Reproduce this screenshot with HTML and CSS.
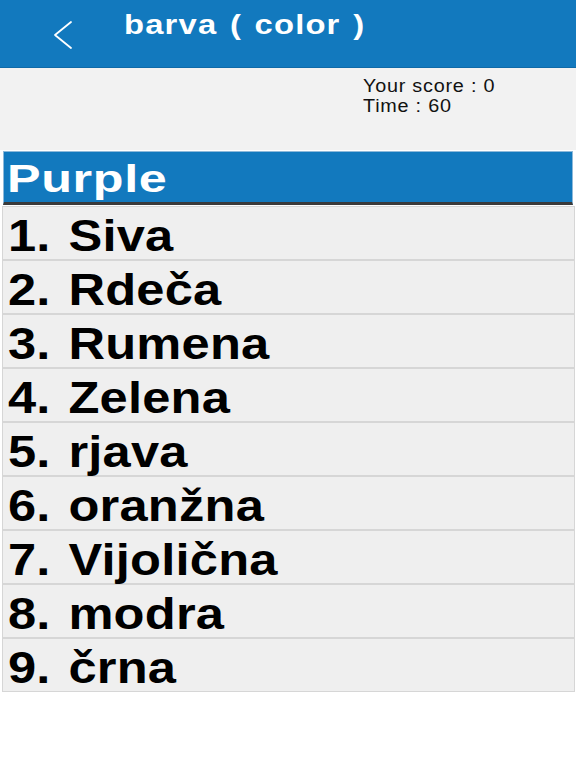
FILE: index.html
```html
<!DOCTYPE html>
<html lang="sl">
<head>
<meta charset="utf-8">
<title>barva ( color )</title>
<link rel="stylesheet" href="styles.css">
</head>
<body>
<header class="topbar">
  <svg class="back" width="24" height="30" viewBox="0 0 24 30" aria-hidden="true">
    <polyline points="20,2 4,15 20,28" fill="none" stroke="#ffffff" stroke-width="1.8" stroke-linecap="round" stroke-linejoin="round"/>
  </svg>
  <h1 class="title"><span class="wide">barva ( color )</span></h1>
</header>
<section class="info">
  <div class="info-line"><span class="wide">Your score : 0</span></div>
  <div class="info-line"><span class="wide">Time : 60</span></div>
</section>
<div class="question"><span class="wide">Purple</span></div>
<ul class="options">
  <li class="option"><span class="wide">1. Siva</span></li>
  <li class="option"><span class="wide">2. Rdeča</span></li>
  <li class="option"><span class="wide">3. Rumena</span></li>
  <li class="option"><span class="wide">4. Zelena</span></li>
  <li class="option"><span class="wide">5. rjava</span></li>
  <li class="option"><span class="wide">6. oranžna</span></li>
  <li class="option"><span class="wide">7. Vijolična</span></li>
  <li class="option"><span class="wide">8. modra</span></li>
  <li class="option"><span class="wide">9. črna</span></li>
</ul>
</body>
</html>
```
FILE: styles.css
```css
html, body {
  margin: 0;
  padding: 0;
  background: #ffffff;
  font-family: "Liberation Sans", Arial, Helvetica, sans-serif;
}

.wide {
  display: inline-block;
  transform-origin: 0 50%;
  white-space: nowrap;
}

.topbar {
  display: flex;
  align-items: flex-start;
  height: 68px;
  box-sizing: border-box;
  padding-top: 9px;
  background: #1279be;
  border-bottom: 1px solid #0f6aa8;
}

.back {
  display: block;
  margin-left: 51px;
  margin-top: 11px;
  flex: none;
}

.title {
  margin: 0 0 0 49px;
  font-size: 28px;
  line-height: 32px;
  font-weight: bold;
  color: #ffffff;
  letter-spacing: 1px;
  word-spacing: 2px;
}

.title .wide {
  transform: scaleX(1.17);
}

.info {
  height: 82px;
  box-sizing: border-box;
  padding: 8px 0 0 363px;
  background: #f2f2f2;
}

.info-line {
  font-size: 18px;
  line-height: 20px;
  color: #111111;
  letter-spacing: 0.7px;
}

.info-line .wide {
  transform: scaleX(1.1);
}

.question {
  margin: 1px 3px 0 3px;
  height: 54px;
  box-sizing: border-box;
  padding: 4px 0 0 3px;
  background: #1279be;
  border: 1px solid #8db9da;
  border-bottom: 3px solid #3a3a3a;
  color: #ffffff;
  font-size: 39px;
  line-height: 46px;
  font-weight: bold;
  letter-spacing: 0.5px;
}

.question .wide {
  transform: scaleX(1.29);
}

.options {
  list-style: none;
  margin: 1px 1px 0 2px;
  padding: 0;
}

.option {
  height: 54px;
  box-sizing: border-box;
  padding: 5px 0 0 5px;
  background: #efefef;
  border: 1px solid #d6d6d6;
  font-size: 44px;
  line-height: 47px;
  font-weight: bold;
  color: #000000;
  letter-spacing: 0.2px;
  word-spacing: 3px;
}

.option .wide {
  transform: scaleX(1.15);
}
```
